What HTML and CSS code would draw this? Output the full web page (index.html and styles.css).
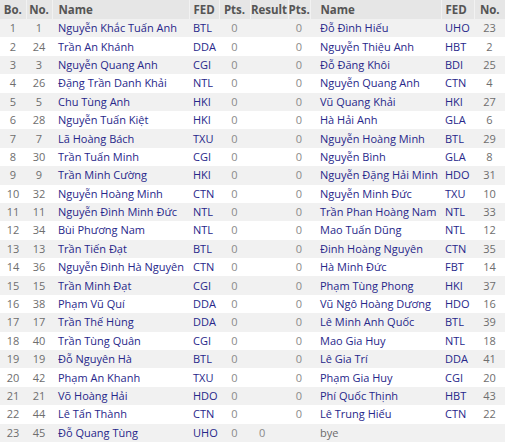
FILE: index.html
```html
<!DOCTYPE html>
<html>
<head>
<meta charset="utf-8">
<link rel="stylesheet" href="styles.css">
</head>
<body>
<table class="pairings">
<colgroup>
<col class="c-bo"><col class="c-no"><col class="c-name"><col class="c-fed"><col class="c-pts"><col class="c-res"><col class="c-pts2"><col class="c-name2"><col class="c-fed2"><col class="c-no2">
</colgroup>
<thead>
<tr><th class="ctr">Bo.</th><th class="ctr">No.</th><th class="lft">Name</th><th class="fedh">FED</th><th class="ctr">Pts.</th><th class="ctr">Result</th><th class="ctr">Pts.</th><th class="lft2">Name</th><th class="fedh">FED</th><th class="ctr">No.</th></tr>
</thead>
<tbody>
<tr><td class="num">1</td><td class="num">1</td><td class="name">Nguyễn Khắc Tuấn Anh</td><td class="fed">BTL</td><td class="pt">0</td><td class="res"></td><td class="pt">0</td><td class="name2">Đỗ Đình Hiếu</td><td class="fed">UHO</td><td class="num">23</td></tr>
<tr><td class="num">2</td><td class="num">24</td><td class="name">Trần An Khánh</td><td class="fed">DDA</td><td class="pt">0</td><td class="res"></td><td class="pt">0</td><td class="name2">Nguyễn Thiệu Anh</td><td class="fed">HBT</td><td class="num">2</td></tr>
<tr><td class="num">3</td><td class="num">3</td><td class="name">Nguyễn Quang Anh</td><td class="fed">CGI</td><td class="pt">0</td><td class="res"></td><td class="pt">0</td><td class="name2">Đỗ Đăng Khôi</td><td class="fed">BDI</td><td class="num">25</td></tr>
<tr><td class="num">4</td><td class="num">26</td><td class="name">Đặng Trần Danh Khải</td><td class="fed">NTL</td><td class="pt">0</td><td class="res"></td><td class="pt">0</td><td class="name2">Nguyễn Quang Anh</td><td class="fed">CTN</td><td class="num">4</td></tr>
<tr><td class="num">5</td><td class="num">5</td><td class="name">Chu Tùng Anh</td><td class="fed">HKI</td><td class="pt">0</td><td class="res"></td><td class="pt">0</td><td class="name2">Vũ Quang Khải</td><td class="fed">HKI</td><td class="num">27</td></tr>
<tr><td class="num">6</td><td class="num">28</td><td class="name">Nguyễn Tuấn Kiệt</td><td class="fed">HKI</td><td class="pt">0</td><td class="res"></td><td class="pt">0</td><td class="name2">Hà Hải Anh</td><td class="fed">GLA</td><td class="num">6</td></tr>
<tr><td class="num">7</td><td class="num">7</td><td class="name">Lã Hoàng Bách</td><td class="fed">TXU</td><td class="pt">0</td><td class="res"></td><td class="pt">0</td><td class="name2">Nguyễn Hoàng Minh</td><td class="fed">BTL</td><td class="num">29</td></tr>
<tr><td class="num">8</td><td class="num">30</td><td class="name">Trần Tuấn Minh</td><td class="fed">CGI</td><td class="pt">0</td><td class="res"></td><td class="pt">0</td><td class="name2">Nguyễn Bình</td><td class="fed">GLA</td><td class="num">8</td></tr>
<tr><td class="num">9</td><td class="num">9</td><td class="name">Trần Minh Cường</td><td class="fed">HKI</td><td class="pt">0</td><td class="res"></td><td class="pt">0</td><td class="name2">Nguyễn Đặng Hải Minh</td><td class="fed">HDO</td><td class="num">31</td></tr>
<tr><td class="num">10</td><td class="num">32</td><td class="name">Nguyễn Hoàng Minh</td><td class="fed">CTN</td><td class="pt">0</td><td class="res"></td><td class="pt">0</td><td class="name2">Nguyễn Minh Đức</td><td class="fed">TXU</td><td class="num">10</td></tr>
<tr><td class="num">11</td><td class="num">11</td><td class="name">Nguyễn Đình Minh Đức</td><td class="fed">NTL</td><td class="pt">0</td><td class="res"></td><td class="pt">0</td><td class="name2">Trần Phan Hoàng Nam</td><td class="fed">NTL</td><td class="num">33</td></tr>
<tr><td class="num">12</td><td class="num">34</td><td class="name">Bùi Phương Nam</td><td class="fed">NTL</td><td class="pt">0</td><td class="res"></td><td class="pt">0</td><td class="name2">Mao Tuấn Dũng</td><td class="fed">NTL</td><td class="num">12</td></tr>
<tr><td class="num">13</td><td class="num">13</td><td class="name">Trần Tiến Đạt</td><td class="fed">BTL</td><td class="pt">0</td><td class="res"></td><td class="pt">0</td><td class="name2">Đinh Hoàng Nguyên</td><td class="fed">CTN</td><td class="num">35</td></tr>
<tr><td class="num">14</td><td class="num">36</td><td class="name">Nguyễn Đình Hà Nguyên</td><td class="fed">CTN</td><td class="pt">0</td><td class="res"></td><td class="pt">0</td><td class="name2">Hà Minh Đức</td><td class="fed">FBT</td><td class="num">14</td></tr>
<tr><td class="num">15</td><td class="num">15</td><td class="name">Trần Minh Đạt</td><td class="fed">CGI</td><td class="pt">0</td><td class="res"></td><td class="pt">0</td><td class="name2">Phạm Tùng Phong</td><td class="fed">HKI</td><td class="num">37</td></tr>
<tr><td class="num">16</td><td class="num">38</td><td class="name">Phạm Vũ Quí</td><td class="fed">DDA</td><td class="pt">0</td><td class="res"></td><td class="pt">0</td><td class="name2">Vũ Ngô Hoàng Dương</td><td class="fed">HDO</td><td class="num">16</td></tr>
<tr><td class="num">17</td><td class="num">17</td><td class="name">Trần Thế Hùng</td><td class="fed">DDA</td><td class="pt">0</td><td class="res"></td><td class="pt">0</td><td class="name2">Lê Minh Anh Quốc</td><td class="fed">BTL</td><td class="num">39</td></tr>
<tr><td class="num">18</td><td class="num">40</td><td class="name">Trần Tùng Quân</td><td class="fed">CGI</td><td class="pt">0</td><td class="res"></td><td class="pt">0</td><td class="name2">Mao Gia Huy</td><td class="fed">NTL</td><td class="num">18</td></tr>
<tr><td class="num">19</td><td class="num">19</td><td class="name">Đỗ Nguyên Hà</td><td class="fed">BTL</td><td class="pt">0</td><td class="res"></td><td class="pt">0</td><td class="name2">Lê Gia Trí</td><td class="fed">DDA</td><td class="num">41</td></tr>
<tr><td class="num">20</td><td class="num">42</td><td class="name">Phạm An Khanh</td><td class="fed">TXU</td><td class="pt">0</td><td class="res"></td><td class="pt">0</td><td class="name2">Phạm Gia Huy</td><td class="fed">CGI</td><td class="num">20</td></tr>
<tr><td class="num">21</td><td class="num">21</td><td class="name">Võ Hoàng Hải</td><td class="fed">HDO</td><td class="pt">0</td><td class="res"></td><td class="pt">0</td><td class="name2">Phí Quốc Thịnh</td><td class="fed">HBT</td><td class="num">43</td></tr>
<tr><td class="num">22</td><td class="num">44</td><td class="name">Lê Tấn Thành</td><td class="fed">CTN</td><td class="pt">0</td><td class="res"></td><td class="pt">0</td><td class="name2">Lê Trung Hiếu</td><td class="fed">CTN</td><td class="num">22</td></tr>
<tr><td class="num">23</td><td class="num">45</td><td class="name">Đỗ Quang Tùng</td><td class="fed">UHO</td><td class="pt">0</td><td class="res bye-res">0</td><td class="pt"></td><td class="name2 bye">bye</td><td class="fed"></td><td class="num"></td></tr>
</tbody>
</table>
</body>
</html>
```
FILE: styles.css
```css
html, body {
  margin: 0;
  padding: 0;
  background: #ffffff;
}
.pairings {
  width: 505px;
  table-layout: fixed;
  border-collapse: collapse;
  font-family: "Open Sans", "Noto Sans", sans-serif;
  font-size: 11px;
  color: #6b6b6b;
}
.c-bo { width: 26px; }
.c-no { width: 26px; }
.c-name { width: 137px; }
.c-fed { width: 30px; }
.c-pts { width: 31px; }
.c-res { width: 38px; }
.c-pts2 { width: 22px; }
.c-name2 { width: 131px; }
.c-fed2 { width: 33px; }
.c-no2 { width: 31px; }

.pairings thead tr {
  height: 19px;
  background: #e6e6e6;
}
.pairings th {
  padding: 0;
  font-size: 11.5px;
  font-weight: bold;
  color: #555555;
  white-space: nowrap;
  border-left: 1px solid #f2f2f2;
}
.pairings th:first-child { border-left: none; }
.pairings th.ctr { text-align: center; }
.pairings th.lft { text-align: left; padding-left: 6px; }
.pairings th.lft2 { text-align: left; padding-left: 10px; }
.pairings th.fedh { text-align: left; padding-left: 4px; }

.pairings tbody tr {
  height: 18.4px;
}
.pairings tbody tr:nth-child(odd) {
  background: #f1f1f1;
}
.pairings td {
  padding: 0;
  white-space: nowrap;
  line-height: 18px;
}
.num { text-align: center; color: #6e6e6e; }
.name { padding-left: 6px !important; color: #27278a; }
.name2 { padding-left: 10px !important; color: #27278a; }
.fed { padding-left: 4px !important; color: #27278a; }
.pt { text-align: center; color: #8a8a8a; }
.res { text-align: left; }
.bye-res { padding-left: 9px !important; color: #8a8a8a; }
.name2.bye { color: #6b6b6b; }
```
